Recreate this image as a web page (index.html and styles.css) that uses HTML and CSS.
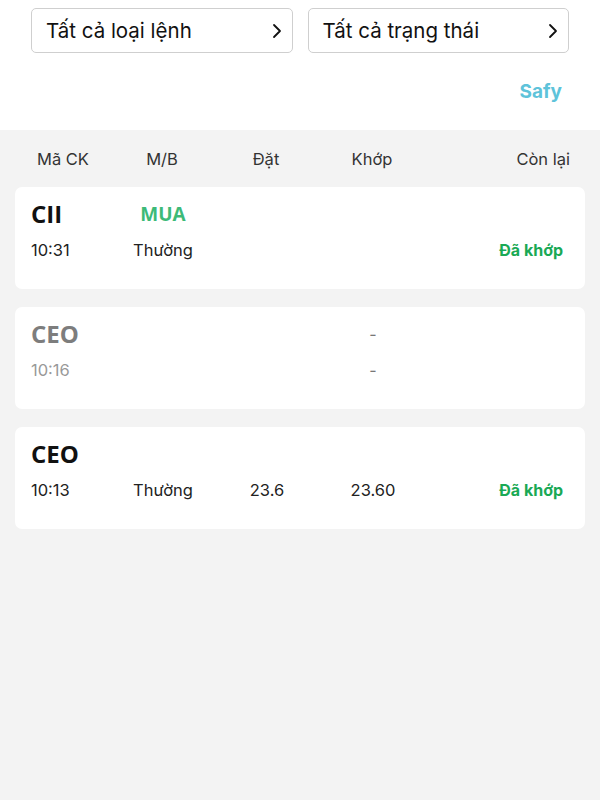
FILE: index.html
```html
<!DOCTYPE html>
<html lang="vi">
<head>
<meta charset="utf-8">
<link rel="stylesheet" href="styles.css">
</head>
<body>
<div class="top">
  <div class="filters">
    <div class="select"><span>Tất cả loại lệnh</span><svg class="chev" viewBox="0 0 10 16" width="10" height="16"><path d="M2 2l6 6-6 6" fill="none" stroke="#111" stroke-width="1.8" stroke-linecap="round" stroke-linejoin="round"/></svg></div>
    <div class="select"><span>Tất cả trạng thái</span><svg class="chev" viewBox="0 0 10 16" width="10" height="16"><path d="M2 2l6 6-6 6" fill="none" stroke="#111" stroke-width="1.8" stroke-linecap="round" stroke-linejoin="round"/></svg></div>
  </div>
  <div class="brand-row"><span class="brand">Safy</span></div>
</div>
<div class="list">
  <div class="row head">
    <span class="c1 hc1">Mã CK</span><span class="c2">M/B</span><span class="c3">Đặt</span><span class="c4">Khớp</span><span class="c5">Còn lại</span>
  </div>
  <div class="card">
    <div class="row l1"><span class="c1 code">CII</span><span class="c2 buy">MUA</span><span class="c3"></span><span class="c4"></span><span class="c5"></span></div>
    <div class="row l2"><span class="c1">10:31</span><span class="c2">Thường</span><span class="c3"></span><span class="c4"></span><span class="c5 ok">Đã khớp</span></div>
  </div>
  <div class="card muted">
    <div class="row l1"><span class="c1 code">CEO</span><span class="c2"></span><span class="c3"></span><span class="c4 dash">-</span><span class="c5"></span></div>
    <div class="row l2"><span class="c1">10:16</span><span class="c2"></span><span class="c3"></span><span class="c4 dash">-</span><span class="c5"></span></div>
  </div>
  <div class="card">
    <div class="row l1"><span class="c1 code">CEO</span><span class="c2"></span><span class="c3"></span><span class="c4"></span><span class="c5"></span></div>
    <div class="row l2"><span class="c1">10:13</span><span class="c2">Thường</span><span class="c3">23.6</span><span class="c4">23.60</span><span class="c5 ok">Đã khớp</span></div>
  </div>
</div>
</body>
</html>
```
FILE: styles.css
```css
* { box-sizing: border-box; }
html, body { margin: 0; padding: 0; }
body {
  width: 600px;
  height: 800px;
  background: #f3f3f3;
  font-family: Inter, "Noto Sans", sans-serif;
  color: #222;
  overflow: hidden;
}
.top {
  background: #fff;
  height: 130px;
  padding: 8px 31px 0 31px;
}
.filters {
  display: flex;
  gap: 15px;
}
.select {
  flex: 1;
  height: 45px;
  border: 1px solid #cfcfcf;
  border-radius: 5px;
  display: flex;
  align-items: center;
  justify-content: space-between;
  padding: 0 10px 0 14px;
  font-size: 20.5px;
  color: #111;
}
.chev { display: block; }
.brand-row {
  display: flex;
  justify-content: flex-end;
  padding: 27px 7px 0 0;
}
.brand {
  color: #5ec3da;
  font-weight: 700;
  font-size: 19px;
}
.list {
  padding: 0 15px;
  display: flex;
  flex-direction: column;
  gap: 18px;
}
.row {
  display: grid;
  grid-template-columns: 81px 102px 106px 106px 1fr;
  align-items: center;
}
.row > span { white-space: nowrap; }
.c2, .c3, .c4 { text-align: center; }
.c5 { text-align: right; }
.head {
  height: 57px;
  padding: 0 15px 0 22px;
  font-size: 16.5px;
  color: #333;
  grid-template-columns: 74px 102px 106px 106px 1fr;
  margin-bottom: -18px;
}
.card {
  background: #fff;
  border-radius: 7px;
  height: 102px;
  padding: 8px 22px 0 16px;
}
.l1 { height: 37px; }
.l2 { height: 36px; font-size: 16.5px; color: #222; }
.code {
  font-family: "Open Sans", Inter, sans-serif;
  font-weight: 700;
  font-size: 24px;
  color: #111;
}
.buy {
  color: #3dba78;
  font-family: "Open Sans", Inter, sans-serif;
  font-weight: 700;
  font-size: 19px;
}
.ok {
  color: #1aa955;
  font-weight: 700;
  font-size: 16px;
}
.dash { color: #777; font-size: 16px; }
.muted .code { color: #7d7d7d; }
.muted .l2 { color: #999; }
```
